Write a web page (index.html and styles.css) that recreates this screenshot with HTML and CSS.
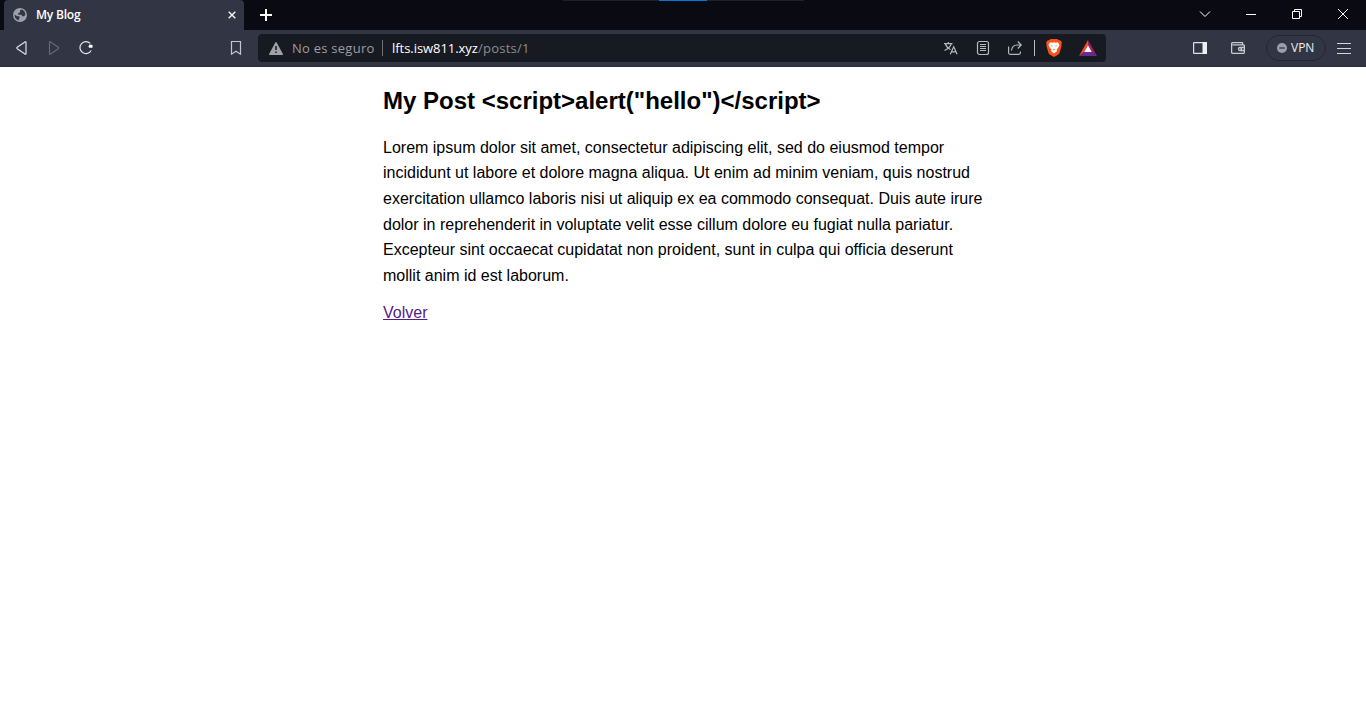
FILE: index.html
```html
<!DOCTYPE html>
<html lang="es">
<head>
<meta charset="utf-8">
<title>My Blog</title>
<link rel="stylesheet" href="styles.css">
</head>
<body>
<header class="browser">
  <div class="tabstrip">
    <div class="tab">
      <svg class="globe" width="14" height="14" viewBox="0 0 14 14"><circle cx="7" cy="7" r="7" fill="#9ca0a9"/><path d="M8.400 1.600Q12.400 2.800 12.400 7L10.800 8.300H9.200L8.500 6.800H5.200V5.300L7 4.300V2.600ZM1.500 6.700 4.500 8.200H6.500V10L5.600 12.300Q1.600 11 1.500 6.700Z" fill="#323543"/></svg>
      <span class="tab-title">My Blog</span>
      <svg class="tab-close" width="8" height="8" viewBox="0 0 8 8"><path d="m.7.7 6.600 6.600m0-6.600L.7 7.300" fill="none" stroke="#eee" stroke-width="1.500"/></svg>
    </div>
    <svg class="newtab" width="12" height="12" viewBox="0 0 12 12"><path d="M6 0v12M0 6h12" stroke="#fff" stroke-width="2"/></svg>
    <div class="edge"><div class="edge-active"></div></div>
    <div class="window-buttons">
      <svg width="46" height="30" viewBox="0 0 46 30"><path d="m18 11.500 5 5 5-5" class="thin"/></svg>
      <svg width="46" height="30" viewBox="0 0 46 30"><path d="M18 14.500h10" class="thin"/></svg>
      <svg width="46" height="30" viewBox="0 0 46 30"><path d="M18.500 11.500h7v7h-7zM20.500 11.500v-2h7v7h-2" class="thin"/></svg>
      <svg width="46" height="30" viewBox="0 0 46 30"><path d="m18 9 10 10m0-10L18 19" class="thin"/></svg>
    </div>
  </div>
  <div class="toolbar">
    <div class="nav">
      <svg width="18" height="18" viewBox="0 0 18 18"><path d="M13 3.500v11q0 1.200-1 .6L4.200 9.700q-.8-.7 0-1.400L12 2.900q1-.6 1 .6Z" fill="none" stroke="#dedfe2" stroke-width="1.200"/></svg>
      <svg width="18" height="18" viewBox="0 0 18 18"><path d="M4.500 3.500v11q0 1.200 1 .6l7.800-5.400q.8-.7 0-1.400L5.500 2.900q-1-.6-1 .6Z" fill="none" stroke="#666975" stroke-width="1.200"/></svg>
      <svg width="18" height="18" viewBox="0 0 18 18"><path d="M13.200 4.400A6 6 0 1 0 14.200 11.500" fill="none" stroke="#e2e3e5" stroke-width="1.200"/><path d="M12.500 5.500 15.500 6v2.800h-3.200l-1-1.200Z" fill="#fff"/></svg>
      <svg class="bookmark" width="18" height="18" viewBox="0 0 18 18"><path d="M4.500 2.500h9v12.700L9 12.200l-4.500 3Z" fill="none" stroke="#c4c5c9" stroke-width="1.200"/></svg>
    </div>
    <div class="address">
      <svg width="14" height="13" viewBox="0 0 14 13"><path d="M6.200.7q.8-1.200 1.600 0l6 11q.5 1.300-.7 1.300H.9q-1.200 0-.7-1.300Z" fill="#a0a2aa"/><path d="M7 4v4m0 1.500V11" stroke="#171a21" stroke-width="1.500"/></svg>
      <span class="security">No es seguro</span>
      <span class="divider"></span>
      <span class="host">lfts.isw811.xyz</span><span class="path">/posts/1</span>
      <div class="address-actions">
        <svg width="18" height="18" viewBox="0 0 18 18"><path d="M2 4.700h8.500M6.300 3v1.700M3.500 5q1.200 3.800 5 5.500M9.200 5q-1.500 4.300-6.700 6.500M8.300 15.300l3.400-7.500 3.400 7.500M9.500 12.900h4.400" fill="none" stroke="#b4b6bb" stroke-width="1.200"/></svg>
        <svg width="18" height="18" viewBox="0 0 18 18"><rect x="3.500" y="2.500" width="11" height="13" rx="2" fill="none" stroke="#b8bac0" stroke-width="1.200"/><path d="M6 5.500h6M6 7.500h6M6 9.500h6M6 11.500h6" stroke="#b8bac0"/></svg>
        <svg width="18" height="18" viewBox="0 0 18 18"><path d="M2.600 7.500v6.300q0 1.500 1.500 1.500h8.800q1.500 0 1.500-1.500v-1.300M5.500 11.500Q6.200 6 11 6h3.800M11.800 2.500 15.200 6l-3.400 3.500" fill="none" stroke="#b4b6bb" stroke-width="1.200"/></svg>
      </div>
      <span class="divider bright"></span>
      <svg class="brave" width="16" height="18" viewBox="0 0 16 18"><path d="M4.500 0h7l1.200 1.300 1.500-.1L16 3.600l-.6 1.600.2 1.500-2 7q-.3 1-1.200 1.700L8 18l-4.400-2.600q-.9-.7-1.200-1.700l-2-7 .2-1.500L0 3.600l1.800-2.400 1.500.1Z" fill="#fb5114"/><path d="m4 3.200 2.300.5L8 3.300l1.700.4 2.300-.5 1.500 2.700-1.500 3-1.400 1.500.5 1.700L8 14.600l-3.100-2.500.5-1.700L4 8.900l-1.500-3Z" fill="#fff"/><path d="m4.500 6.200 2.300.5-.7.900ZM11.500 6.200l-2.300.5.700.9ZM7 9.600l1 .8 1-.8-.4 1.700H7.400Z" fill="#fb5114"/></svg>
      <svg width="18" height="16" viewBox="0 0 18 16"><path d="M9 0v5.300L5.200 12 0 16Z" fill="#ff4724"/><path d="m9 0 9 16-5.200-4L9 5.300Z" fill="#9e1f63"/><path d="M0 16h18l-5.200-4H5.200Z" fill="#662d91"/><path d="m9 5.300 3.800 6.700H5.200Z" fill="#fff"/></svg>
    </div>
    <div class="extras">
      <svg width="14" height="12" viewBox="0 0 14 12"><rect x=".6" y=".6" width="12.800" height="10.800" rx=".5" fill="none" stroke="#dedfe3" stroke-width="1.200"/><path d="M9.500 0H14v12H9.500Z" fill="#eeeff1"/></svg>
      <svg class="wallet" width="14" height="12" viewBox="0 0 14 12"><path d="M11.500 2.800V.6H1.800Q.6.600.6 1.800v8.400q0 1.200 1.200 1.200h10.400q1.200 0 1.200-1.200V3.900q0-1.100-1.200-1.100H1.500M13.400 5.500H8.800Q7.500 5.500 7.500 7t1.300 1.500h4.600M9.500 7h1.500" fill="none" stroke="#c8cacf" stroke-width="1.300"/></svg>
      <div class="vpn"><svg width="10" height="10" viewBox="0 0 10 10"><circle cx="5" cy="5" r="5" fill="#9b9eb0"/><path d="M2.300 5h5.400" stroke="#323543" stroke-width="1.300"/></svg><span>VPN</span></div>
      <svg class="menu" width="14" height="11" viewBox="0 0 14 11"><path d="M0 .5h14M0 5.500h14M0 10.500h14" stroke="#d5d6da"/></svg>
    </div>
  </div>
</header>
<main class="post">
  <h1 class="post-title">My Post &lt;script&gt;alert("hello")&lt;/script&gt;</h1>
  <p class="post-body">Lorem ipsum dolor sit amet, consectetur adipiscing elit, sed do eiusmod tempor incididunt ut labore et dolore magna aliqua. Ut enim ad minim veniam, quis nostrud exercitation ullamco laboris nisi ut aliquip ex ea commodo consequat. Duis aute irure dolor in reprehenderit in voluptate velit esse cillum dolore eu fugiat nulla pariatur. Excepteur sint occaecat cupidatat non proident, sunt in culpa qui officia deserunt mollit anim id est laborum.</p>
  <a class="back-link" href="#">Volver</a>
</main>
</body>
</html>
```

FILE: styles.css
```css
* { box-sizing: border-box; }
body { margin: 0; background: #fff; overflow: hidden; }
svg { display: block; flex: none; }
.browser { font-family: "Open Sans", "Noto Sans", sans-serif; white-space: nowrap; }
.tabstrip { position: relative; display: flex; align-items: center; height: 30px; padding-left: 4px; background: #0a0a13; }
.tab { display: flex; align-items: center; width: 240px; height: 30px; padding: 0 8px 0 9px; border-radius: 4px 4px 0 0; background: #323543; }
.tab-title { margin-left: 9px; color: #fff; font-size: 12px; font-weight: 600; line-height: 16px; letter-spacing: -0.2px; }
.tab-close { margin-left: auto; }
.newtab { margin-left: 16px; }
.edge { position: absolute; top: 0; left: 563px; width: 241px; height: 1px; background: #202020; }
.edge-active { width: 48px; height: 1px; margin-left: 96px; background: #0078d7; }
.window-buttons { display: flex; margin-left: auto; }
.thin { fill: none; stroke: #fff; stroke-width: 1; }
.toolbar { display: flex; align-items: center; height: 37px; padding: 0 15px 0 13px; background: #323543; border-bottom: 1px solid #2b2e3b; }
.nav { display: flex; gap: 14px; width: 232px; }
.bookmark { margin-left: auto; }
.address { display: flex; align-items: center; width: 848px; height: 28px; margin-left: 13px; padding: 0 9px 0 11px; border-radius: 4px; background: #171a21; font-size: 13px; line-height: 18px; }
.security { width: 82px; margin-left: 9px; color: #9b9da3; letter-spacing: 0.25px; }
.divider { width: 1px; height: 16px; margin: 0 9px 0 8px; background: #6d7076; }
.host { width: 86px; color: #fff; letter-spacing: -0.05px; }
.path { color: #8b8d93; letter-spacing: 0.25px; }
.address-actions { display: flex; gap: 14px; margin-left: auto; }
.bright { margin: 0 11px 0 10px; background: #babbbe; }
.brave { margin-right: 17px; }
.extras { display: flex; align-items: center; margin-left: auto; }
.wallet { margin-left: 24px; }
.vpn { display: flex; align-items: center; width: 60px; height: 26px; margin-left: 21px; padding-left: 10px; border: 1px solid #242733; border-radius: 13px; color: #eee; font-size: 12px; line-height: 16px; }
.vpn span { margin-left: 4px; }
.menu { margin-left: 11px; }
.post { width: 600px; margin: 0 auto; padding-top: 15px; color: #000; font: 16px/1.6 "Liberation Sans", Arial, sans-serif; }
.post-title { margin: 0; font-size: 24px; line-height: 38px; }
.post-body { margin: 14.8px 0 11.2px; }
.back-link { color: #551a8b; }
```
